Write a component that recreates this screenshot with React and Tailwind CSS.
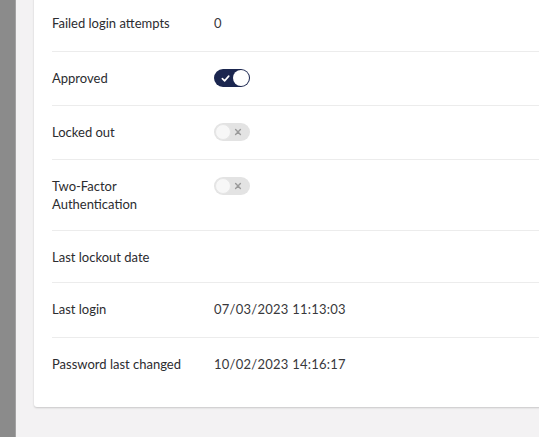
import React from "react";

function Toggle({ on }) {
  if (on) {
    return (
      <div className="relative flex h-[18px] w-[36px] items-center rounded-full bg-[#1b264f]">
        <svg viewBox="0 0 10 10" className="ml-[7px] h-[9px] w-[9px]" fill="none">
          <path d="M1.5 5.2 L4 7.6 L8.6 2.4" stroke="#fff" strokeWidth="1.8" strokeLinecap="round" strokeLinejoin="round" />
        </svg>
        <div className="absolute right-[1px] top-[1px] h-[16px] w-[16px] rounded-full bg-white" />
      </div>
    );
  }
  return (
    <div className="relative flex h-[18px] w-[36px] items-center justify-end rounded-full bg-[#e3e3e3]">
      <svg viewBox="0 0 10 10" className="mr-[8px] h-[8px] w-[8px]" fill="none">
        <path d="M2 2 L8 8 M8 2 L2 8" stroke="#9a9a9a" strokeWidth="1.8" strokeLinecap="round" />
      </svg>
      <div className="absolute left-[1px] top-[1px] h-[16px] w-[16px] rounded-full border border-[#e6e6e6] bg-[#f7f7f7]" />
    </div>
  );
}

const rows = [
  { label: "Failed login attempts", value: "0", h: "h-[54px]" },
  { label: "Approved", toggle: true, h: "h-[54px]" },
  { label: "Locked out", toggle: false, h: "h-[54px]" },
  { label: "Two-Factor Authentication", toggle: false, wrap: true, h: "h-[71px]" },
  { label: "Last lockout date", value: "", h: "h-[52px]" },
  { label: "Last login", value: "07/03/2023 11:13:03", h: "h-[55px]" },
  { label: "Password last changed", value: "10/02/2023 14:16:17", h: "h-[54px]" },
];

export default function App() {
  return (
    <div
      className="flex h-[437px] w-[539px] overflow-hidden bg-[#f3f2f3] text-[13px] text-[#2c2c30]"
      style={{ fontFamily: "Lato, 'Open Sans', sans-serif" }}
    >
      <div className="w-4 shrink-0 border-r border-[#a3a3a3] bg-[#8b8b8b]" />
      <div className="ml-[18px] shrink-0">
        <div className="-mt-[3px] w-[540px] rounded-b-[3px] bg-white px-[18px] pb-[16px] shadow-[0_1px_2px_rgba(0,0,0,0.18)]">
          {rows.map((r, i) => (
            <div
              key={r.label}
              className={
                "grid grid-cols-[162px_1fr] items-start pt-[17px] leading-[18px] " +
                r.h +
                (i > 0 ? " border-t border-[#ececec]" : "")
              }
            >
              <div className={r.wrap ? "w-[110px]" : ""}>{r.label}</div>
              <div>
                {r.toggle !== undefined ? (
                  <Toggle on={r.toggle} />
                ) : (
                  <span className="tracking-[0.25px] text-[#38383b]">{r.value}</span>
                )}
              </div>
            </div>
          ))}
        </div>
      </div>
    </div>
  );
}
